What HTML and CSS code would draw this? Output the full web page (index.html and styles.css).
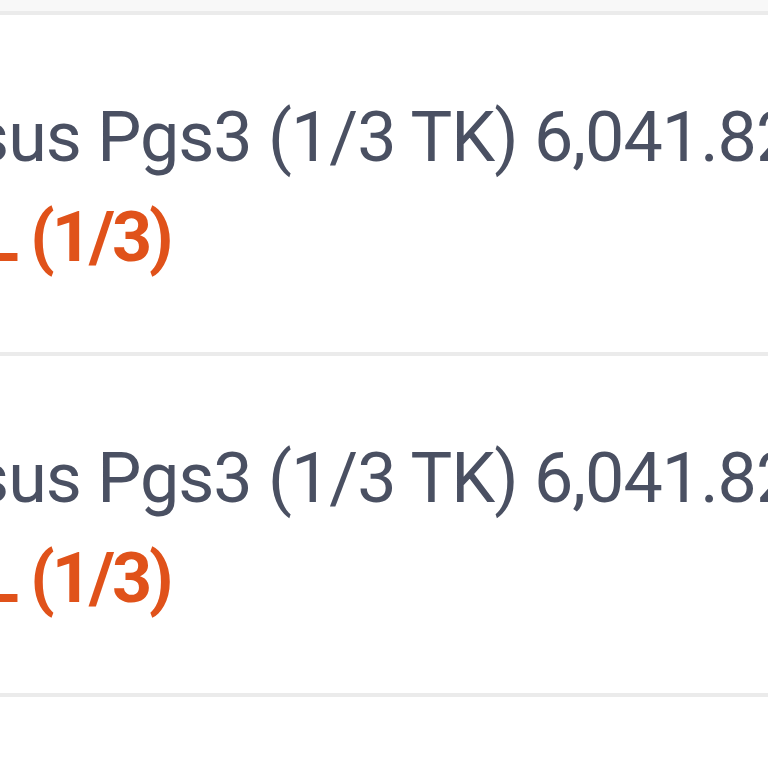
FILE: index.html
```html
<!DOCTYPE html>
<html>
<head>
<meta charset="utf-8">
<link rel="stylesheet" href="styles.css">
</head>
<body>
<div class="top"></div>
<ul class="list">
  <li class="row">
    <div class="title">sus Pgs3 (1/3 TK) 6,041.82</div>
    <div class="tag">L (1/3)</div>
  </li>
  <li class="row">
    <div class="title">sus Pgs3 (1/3 TK) 6,041.82</div>
    <div class="tag">L (1/3)</div>
  </li>
</ul>
</body>
</html>
```
FILE: styles.css
```css
html, body {
  margin: 0;
  padding: 0;
  background: #ffffff;
  overflow: hidden;
  width: 768px;
  height: 768px;
}
body {
  font-family: Roboto, "Noto Sans", sans-serif;
}
.top {
  height: 11px;
  background: #f8f8f8;
}
.list {
  list-style: none;
  margin: 0;
  padding: 0;
  border-top: 4px solid #ebebeb;
}
.row {
  border-bottom: 4px solid #ebebeb;
  padding: 72px 0 65px 0;
  overflow: hidden;
}
.title,
.tag {
  white-space: nowrap;
  font-size: 70px;
  line-height: 100px;
}
.title {
  color: #4a5062;
  font-weight: 400;
  letter-spacing: -1px;
  margin-left: -27px;
}
.tag {
  color: #e0521a;
  font-weight: 700;
  letter-spacing: -3px;
  margin-left: -19px;
}
```
